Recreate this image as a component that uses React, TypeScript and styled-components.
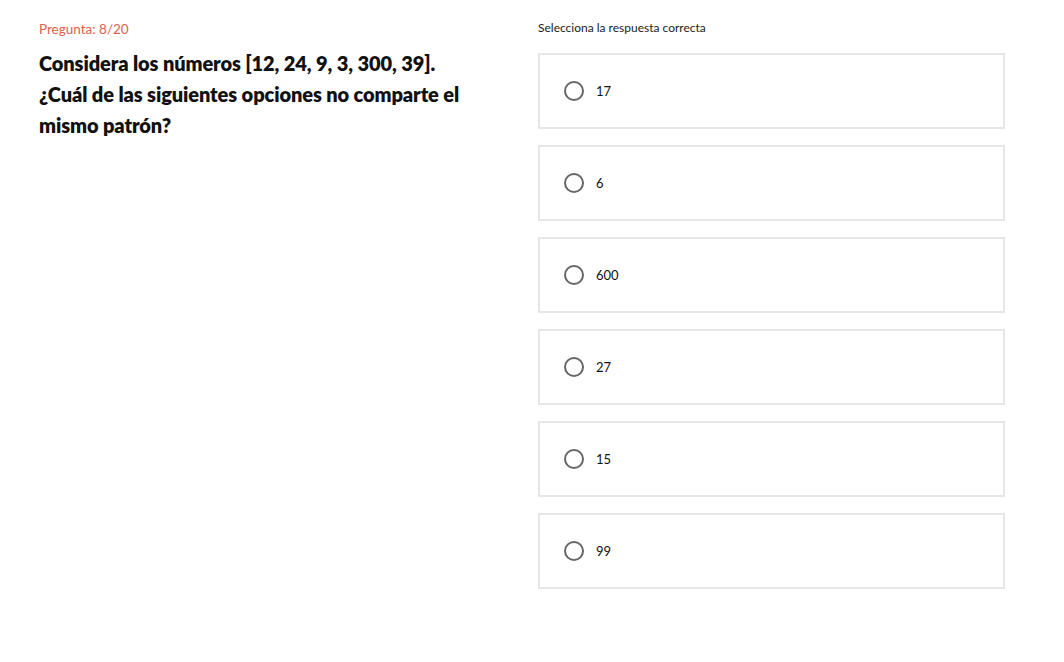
import React from "react";
import styled, { createGlobalStyle } from "styled-components";

const Global = createGlobalStyle`
  html, body { margin: 0; padding: 0; background: #fff; }
  body { font-family: "Lato", "Noto Sans", sans-serif; color: #111; }
`;

const Page = styled.div`
  display: grid;
  grid-template-columns: 499px 467px;
  padding: 20px 0 0 39px;
`;

const Left = styled.div`
  display: flex;
  flex-direction: column;
`;

const Counter = styled.div`
  font-size: 13.5px;
  color: #e0604c;
  line-height: 18px;
`;

const Question = styled.h1`
  margin: 10px 0 0;
  max-width: 460px;
  font-size: 20px;
  font-weight: 800;
  line-height: 31px;
  color: #111;
  letter-spacing: -0.1px;
`;

const Right = styled.div`
  display: flex;
  flex-direction: column;
`;

const Hint = styled.div`
  font-size: 12px;
  color: #222;
  line-height: 16px;
`;

const List = styled.div`
  display: flex;
  flex-direction: column;
  gap: 16px;
  margin-top: 17px;
`;

const Option = styled.label`
  display: flex;
  align-items: center;
  gap: 12px;
  height: 76px;
  box-sizing: border-box;
  border: 2px solid #e6e6e6;
  padding-left: 24px;
  cursor: pointer;
`;

const Radio = styled.span`
  width: 20px;
  height: 20px;
  box-sizing: border-box;
  border: 2px solid #666;
  border-radius: 50%;
`;

const OptionText = styled.span`
  font-size: 13px;
  color: #111;
`;

const options = ["17", "6", "600", "27", "15", "99"];

export default function App() {
  return (
    <>
      <Global />
      <Page>
        <Left>
          <Counter>Pregunta: 8/20</Counter>
          <Question>
            Considera los números [12, 24, 9, 3, 300, 39].
            <br />
            ¿Cuál de las siguientes opciones no comparte el mismo patrón?
          </Question>
        </Left>
        <Right>
          <Hint>Selecciona la respuesta correcta</Hint>
          <List>
            {options.map((o) => (
              <Option key={o}>
                <Radio />
                <OptionText>{o}</OptionText>
              </Option>
            ))}
          </List>
        </Right>
      </Page>
    </>
  );
}
